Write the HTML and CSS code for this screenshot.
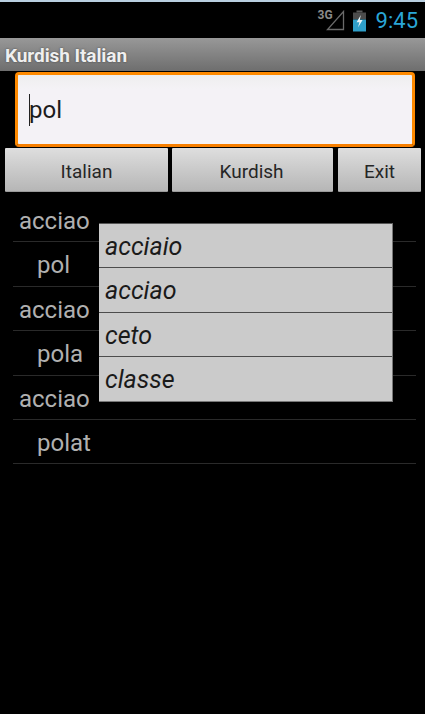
FILE: index.html
```html
<!DOCTYPE html>
<html lang="it">
<head>
<meta charset="utf-8">
<title>Kurdish Italian</title>
<link rel="stylesheet" href="styles.css">
</head>
<body>
<div class="screen">
  <div class="top-edge"></div>
  <div class="status">
    <span class="net">3G</span>
    <svg class="signal" width="19" height="21" viewBox="0 0 19 21"><path d="M17.5 1.5V19.5H1.5Z" fill="none" stroke="#6a6a6a" stroke-width="1.3"/></svg>
    <svg class="battery" width="15" height="22" viewBox="0 0 15 22"><path d="M4.5 0.5h6v2h-6z" fill="#5a5a5a"/><path d="M1 2.5h13v7H1z" fill="#4c4c4c"/><path d="M1 9.5h13V21.5H1z" fill="#2f9fc9"/><path d="M8.8 5 4.6 12.2h2.8L6 17.5l4.6-7.4H7.8Z" fill="#e8f4f8"/></svg>
    <span class="clock">9:45</span>
  </div>
  <div class="titlebar">Kurdish Italian</div>
  <div class="search">
    <div class="field"><span class="caret"></span><span class="query">pol</span></div>
  </div>
  <div class="buttons">
    <div class="btn btn-italian">Italian</div>
    <div class="btn btn-kurdish">Kurdish</div>
    <div class="btn btn-exit">Exit</div>
  </div>
  <div class="results">
    <ul class="list">
      <li class="row">acciao</li>
      <li class="row indent">pol</li>
      <li class="row">acciao</li>
      <li class="row indent">pola</li>
      <li class="row">acciao</li>
      <li class="row indent">polat</li>
    </ul>
    <ul class="suggest">
      <li class="option">acciaio</li>
      <li class="option">acciao</li>
      <li class="option">ceto</li>
      <li class="option">classe</li>
    </ul>
  </div>
</div>
</body>
</html>
```
FILE: styles.css
```css
* { box-sizing: border-box; }
html, body { margin: 0; padding: 0; background: #000; }
.screen {
  width: 425px;
  height: 714px;
  overflow: hidden;
  background: #000;
  font-family: Roboto, "Liberation Sans", sans-serif;
}
.top-edge {
  height: 2px;
  background: #b9cfe0;
}
.status {
  height: 36px;
  display: flex;
  justify-content: flex-end;
  align-items: center;
  padding-right: 7px;
  background: #000;
}
.net {
  font-size: 12px;
  font-weight: 700;
  color: #8a8a8a;
  align-self: flex-start;
  margin-top: 6px;
  margin-right: -7px;
}
.signal { margin-top: 1px; margin-right: 7px; }
.battery { margin-top: 1px; margin-right: 9px; }
.clock {
  font-size: 22px;
  color: #2aa6d6;
  line-height: 36px;
  margin-top: 1px;
}
.titlebar {
  height: 33px;
  padding-left: 5px;
  font-size: 19px;
  font-weight: 700;
  letter-spacing: -0.08px;
  line-height: 35px;
  color: #efefef;
  text-shadow: 0 0 2px #444;
  background: linear-gradient(#989898, #6e6e6e);
}
.search { padding: 1px 10px 0 15px; height: 77px; }
.field {
  height: 75px;
  display: flex;
  align-items: center;
  padding-left: 11px;
  background: linear-gradient(#eeeeee, #f4f2f6 20%);
  border: 3px solid #ff8a00;
  border-bottom-color: #f77f00;
  border-radius: 4px;
  color: #1c1c1c;
  font-size: 24px;
}
.caret {
  width: 1px;
  height: 32px;
  background: #222;
  margin-right: -1px;
}
.buttons {
  display: flex;
  gap: 4px;
  padding-left: 5px;
  height: 44px;
}
.btn {
  height: 44px;
  display: flex;
  align-items: center;
  justify-content: center;
  padding-top: 3px;
  font-size: 19px;
  color: #262626;
  background: linear-gradient(#dedede, #b6b6b6);
  border-bottom: 1px solid #9a9a9a;
  border-radius: 1px;
}
.btn-italian { width: 163px; }
.btn-kurdish { width: 161px; padding-right: 2px; }
.btn-exit { width: 83px; margin-left: 1px; }
.results { position: relative; }
.list {
  list-style: none;
  margin: 0 9px 0 13px;
  padding: 6px 0 0;
}
.row {
  height: 44.4px;
  padding-left: 6px;
  font-size: 24px;
  line-height: 46px;
  color: #b0b0b0;
  border-bottom: 1px solid #2a2a2a;
}
.indent { padding-left: 25px; text-indent: -1px; }
.suggest {
  position: absolute;
  left: 99px;
  top: 31px;
  width: 294px;
  margin: 0;
  padding: 0;
  list-style: none;
  background: #cbcbcb;
  border-right: 1px solid #777;
  border-top: 1px solid #555;
}
.option {
  height: 44.4px;
  padding-left: 6px;
  font-size: 25px;
  font-style: italic;
  line-height: 46px;
  color: #1a1a1a;
  border-bottom: 1px solid #4c4c4c;
}
.option:last-child { border-bottom-color: #777; }
```
